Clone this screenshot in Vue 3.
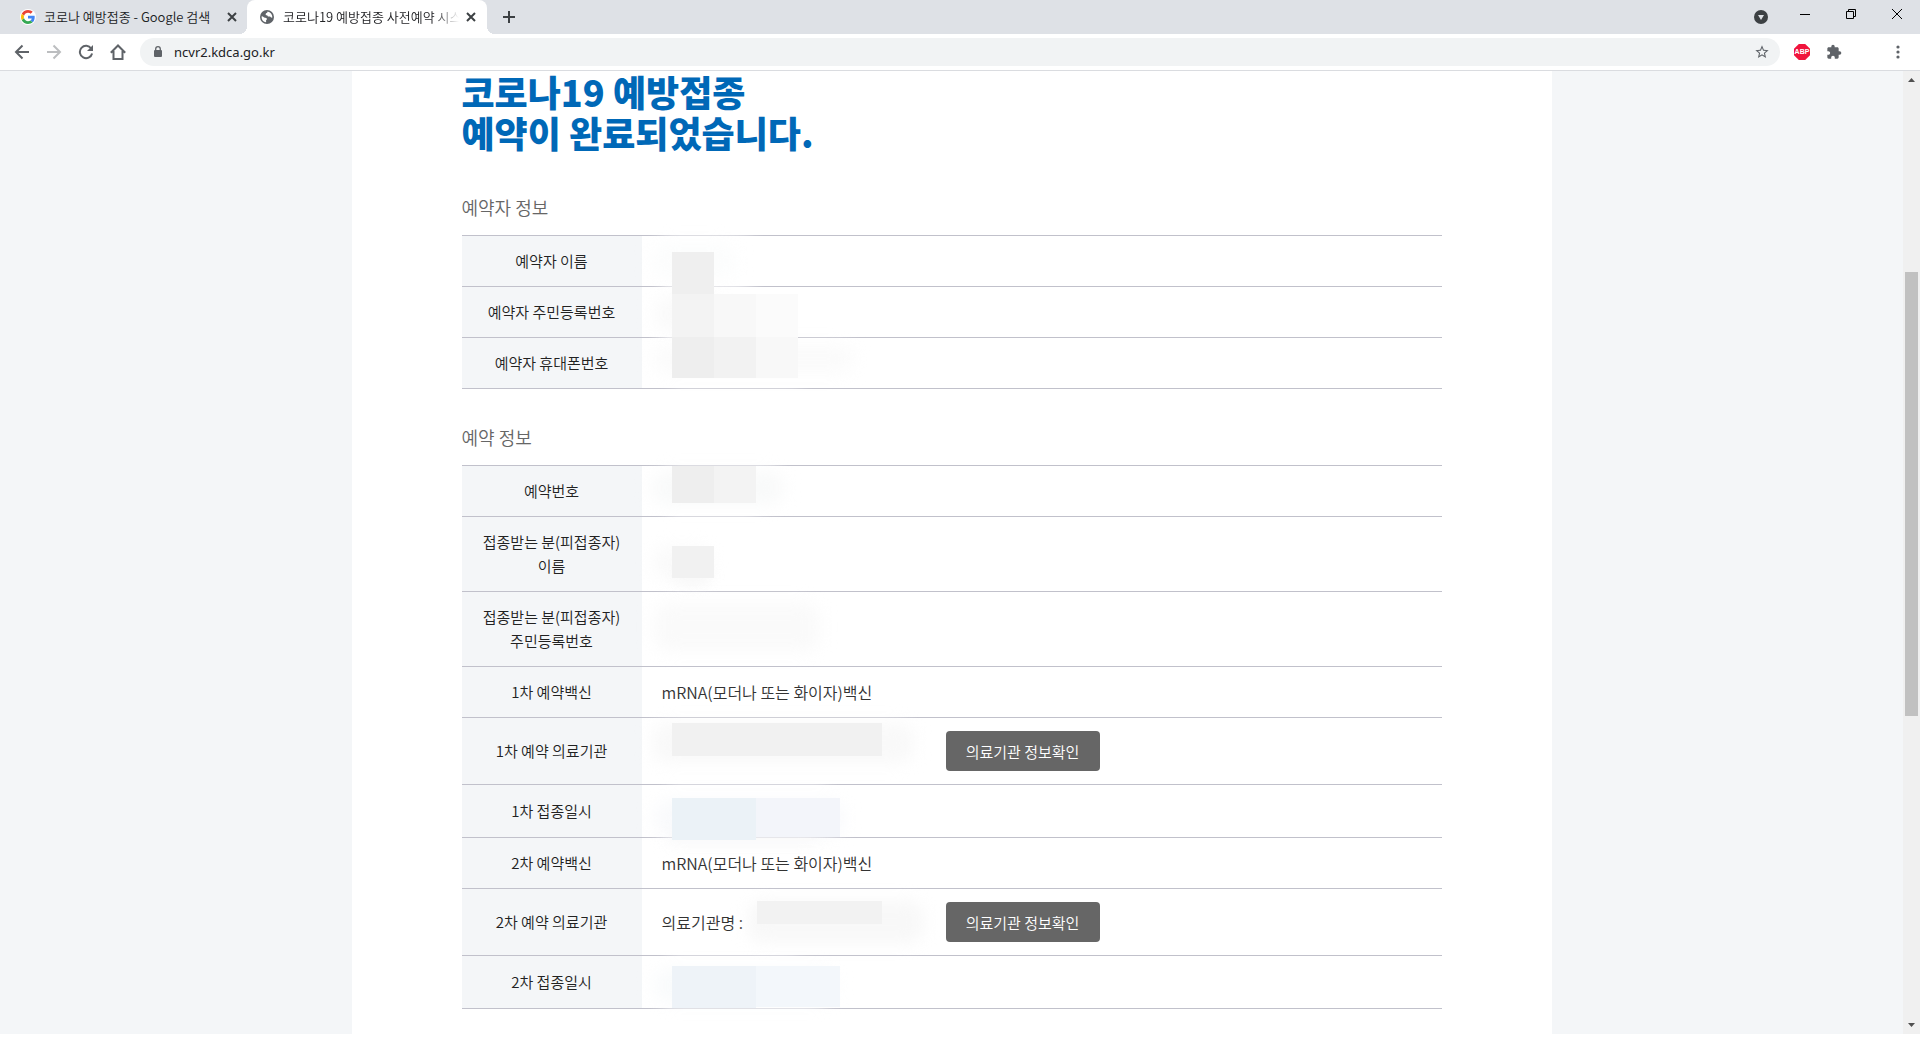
<script setup>
import { ref } from 'vue'

const address = ref('ncvr2.kdca.go.kr')

const booker = [
  { label: ['예약자 이름'] },
  { label: ['예약자 주민등록번호'] },
  { label: ['예약자 휴대폰번호'] },
]

const booking = [
  { label: ['예약번호'] },
  { label: ['접종받는 분(피접종자)', '이름'] },
  { label: ['접종받는 분(피접종자)', '주민등록번호'] },
  { label: ['1차 예약백신'], value: 'mRNA(모더나 또는 화이자)백신' },
  { label: ['1차 예약 의료기관'], clinic: true },
  { label: ['1차 접종일시'], tall: true },
  { label: ['2차 예약백신'], value: 'mRNA(모더나 또는 화이자)백신' },
  { label: ['2차 예약 의료기관'], value: '의료기관명 :', clinic: true },
  { label: ['2차 접종일시'], tall: true },
]

// Privacy masks: [left, top, width, height, colour, soft edge]
const bookerMasks = [
  [200, -6, 90, 14, '#ffffff90', true],
  [190, 8, 84, 36, '#fcfdfd', true],
  [200, 44, 90, 14, '#ffffffcc', true],
  [200, 94, 110, 16, '#ffffffcc', true],
  [210, 147, 130, 12, '#ffffff80', true],
  [192, 62, 70, 34, '#fafafa', true],
  [192, 110, 200, 28, '#fbfbfb', true],
  [210, 17, 42, 42, '#efefef'],
  [210, 59, 42, 43, '#f3f3f3'],
  [252, 59, 42, 43, '#f8f8f8'],
  [294, 59, 42, 43, '#fbfbfb'],
  [210, 102, 42, 41, '#eeeeee'],
  [252, 102, 42, 41, '#f2f2f2'],
  [294, 102, 42, 41, '#f8f8f8'],
]

const bookingMasks = [
  [206, -4, 110, 10, '#ffffff90', true],
  [190, 6, 132, 34, '#f9fafa', true],
  [206, 45, 90, 12, '#ffffffa0', true],
  [210, 1, 42, 37, '#eeeeee'],
  [252, 1, 42, 37, '#f3f3f3'],
  [190, 82, 60, 32, '#fafafa', true],
  [214, 104, 34, 14, '#f6f6f6', true],
  [210, 81, 42, 32, '#f1f1f1'],
  [192, 138, 166, 48, '#fafafa', true],
  [190, 258, 262, 40, '#f9f9f9', true],
  [210, 258, 210, 33, '#f1f1f1'],
  [206, 313, 160, 12, '#ffffffa0', true],
  [192, 335, 190, 36, '#f9fafc', true],
  [206, 367, 150, 12, '#f8f8f8cc', true],
  [210, 333, 84, 42, '#ebf2f7'],
  [294, 333, 84, 39, '#f3f5fa'],
  [286, 436, 176, 42, '#f8f8f8', true],
  [295, 436, 125, 23, '#f2f2f2'],
  [206, 483, 130, 12, '#ffffff90', true],
  [192, 504, 182, 34, '#f9fbfc', true],
  [202, 538, 160, 12, '#ffffffa0', true],
  [210, 501, 84, 42, '#eef3f8'],
  [294, 501, 84, 41, '#f3f7fb'],
]

const maskStyle = ([left, top, width, height, background]) => ({
  left: left + 'px',
  top: top + 'px',
  width: width + 'px',
  height: height + 'px',
  background,
})

const sections = [
  { title: '예약자 정보', rows: booker, masks: bookerMasks },
  { title: '예약 정보', rows: booking, masks: bookingMasks },
]
</script>

<template>
  <div class="window">
    <header class="strip">
      <div class="tab">
        <span class="favicon">
          <svg width="14" height="14" viewBox="0 0 48 48" aria-hidden="true">
            <path fill="#ea4335" d="M24 9.500c3.540 0 6.710 1.220 9.210 3.600l6.850-6.850C35.900 2.380 30.470 0 24 0 14.620 0 6.510 5.380 2.560 13.220l7.980 6.190C12.430 13.720 17.740 9.500 24 9.500z" />
            <path fill="#4285f4" d="M46.980 24.550c0-1.570-.15-3.090-.38-4.550H24v9.020h12.940c-.58 2.960-2.260 5.480-4.780 7.180l7.730 6c4.510-4.180 7.090-10.360 7.090-17.650z" />
            <path fill="#fbbc05" d="M10.530 28.590c-.48-1.450-.76-2.990-.76-4.590s.27-3.140.76-4.590l-7.980-6.190C.92 16.460 0 20.120 0 24c0 3.880.92 7.540 2.560 10.780l7.970-6.190z" />
            <path fill="#34a853" d="M24 48c6.480 0 11.930-2.130 15.890-5.810l-7.730-6c-2.150 1.450-4.920 2.300-8.160 2.300-6.260 0-11.570-4.220-13.470-9.910l-7.980 6.190C6.510 42.620 14.620 48 24 48z" />
          </svg>
        </span>
        <span class="tab-title">코로나 예방접종 - Google 검색</span>
        <button class="tab-close" aria-label="탭 닫기">
          <svg width="10" height="10" viewBox="0 0 10 10"><path d="M1 1l8 8M9 1L1 9" stroke="#3c4043" stroke-width="2" /></svg>
        </button>
      </div>
      <div class="tab active">
        <span class="favicon">
          <svg width="14" height="14" viewBox="0 0 14 14" aria-hidden="true">
            <circle cx="7" cy="7" r="7" fill="#5f6368" />
            <path fill="#fff" d="M7.600 1.600c-.3.9-.2 1.200-1 1.500-.9.300-.9 1-.9 1.600 0 .5.600.5 1.200.6.700.1.600.9 1.200 1.200.7.300 1.200-.2 1.900.1.600.3.500.9 1.300 1 .4.100.800 0 1.100-.1C12.300 4.500 10.500 2 7.600 1.600zM1.700 6.200C1.200 9 3 11.800 5.900 12.300c.3-.5.4-1.100.2-1.600-.2-.5.300-.8.700-1.200.5-.6 0-1.400-.7-1.600C5 7.600 4.600 7.900 3.800 7.200 3.200 6.700 2.500 6.300 1.700 6.200z" />
          </svg>
        </span>
        <span class="tab-title fade">코로나19 예방접종 사전예약 시스</span>
        <button class="tab-close" aria-label="탭 닫기">
          <svg width="10" height="10" viewBox="0 0 10 10"><path d="M1 1l8 8M9 1L1 9" stroke="#3c4043" stroke-width="2" /></svg>
        </button>
      </div>
      <button class="new-tab" aria-label="새 탭">
        <svg width="12" height="12" viewBox="0 0 12 12"><path d="M6 0v12M0 6h12" stroke="#3c4043" stroke-width="2" /></svg>
      </button>
      <div class="controls">
        <button class="search-tabs" aria-label="탭 검색">
          <svg width="14" height="14" viewBox="0 0 14 14"><circle cx="7" cy="7" r="7" fill="#3c4043" /><path d="M4 5h6L7 10z" fill="#dee1e6" /></svg>
        </button>
        <button aria-label="최소화">
          <svg width="10" height="10" viewBox="0 0 10 10"><path d="M0 5.500h10" stroke="#000" /></svg>
        </button>
        <button aria-label="이전 크기로 복원">
          <svg width="10" height="10" viewBox="0 0 10 10"><path d="M.5 2.500h7v7h-7zM2.500 2.500v-2h7v7h-2" fill="none" stroke="#000" /></svg>
        </button>
        <button aria-label="닫기">
          <svg width="10" height="10" viewBox="0 0 10 10"><path d="M0 0l10 10M10 0L0 10" stroke="#000" /></svg>
        </button>
      </div>
    </header>

    <nav class="toolbar">
      <button aria-label="뒤로">
        <svg width="16" height="16" viewBox="0 0 16 16"><path d="M15 8H2M8.500 1.500L2 8l6.500 6.500" fill="none" stroke="#5f6368" stroke-width="2" /></svg>
      </button>
      <button aria-label="앞으로">
        <svg width="16" height="16" viewBox="0 0 16 16"><path d="M1 8h13M7.500 1.500L14 8l-6.500 6.500" fill="none" stroke="#bcbec0" stroke-width="2" /></svg>
      </button>
      <button aria-label="새로고침">
        <svg width="16" height="16" viewBox="0 0 16 16"><path d="M13.200 4.500A6.200 6.200 0 1 0 14.100 9.500" fill="none" stroke="#5f6368" stroke-width="2" /><path d="M15 1v6H9z" fill="#5f6368" /></svg>
      </button>
      <button aria-label="홈">
        <svg width="16" height="16" viewBox="0 0 16 16"><path d="M.8 8.800L8 1.500l7.200 7.300M3.500 7v8h9V7" fill="none" stroke="#5f6368" stroke-width="2" /></svg>
      </button>
      <div class="omnibox">
        <svg width="10" height="12" viewBox="0 0 10 12" aria-hidden="true"><rect x="1" y="4" width="8" height="7" rx="1" fill="#5f6368" /><path d="M2.700 5V3a2.300 2.300 0 0 1 4.600 0v2" fill="none" stroke="#5f6368" stroke-width="1.300" /></svg>
        <input v-model="address" aria-label="주소창" type="text" spellcheck="false" />
        <button class="star" aria-label="북마크">
          <svg width="16" height="16" viewBox="0 0 24 24"><path fill="#5f6368" d="M22 9.240l-7.190-.62L12 2 9.190 8.630 2 9.240l5.460 4.730L5.820 21 12 17.270 18.180 21l-1.630-7.030L22 9.240zM12 15.400l-3.760 2.270 1-4.280-3.320-2.880 4.380-.38L12 6.100l1.710 4.040 4.380.38-3.320 2.880 1 4.280L12 15.400z" /></svg>
        </button>
      </div>
      <button class="ext" aria-label="Adblock Plus"><span class="abp">ABP</span></button>
      <button class="ext" aria-label="확장 프로그램">
        <svg width="16" height="16" viewBox="0 0 24 24"><path fill="#5f6368" d="M20.500 11H19V7c0-1.100-.9-2-2-2h-4V3.500a2.500 2.500 0 0 0-5 0V5H4c-1.100 0-1.990.9-1.990 2v3.800H3.500c1.490 0 2.700 1.210 2.700 2.700s-1.210 2.700-2.700 2.700H2V20c0 1.100.9 2 2 2h3.800v-1.500c0-1.490 1.210-2.700 2.700-2.700s2.700 1.210 2.700 2.700V22H17c1.100 0 2-.9 2-2v-4h1.500a2.500 2.500 0 0 0 0-5z" /></svg>
      </button>
      <button class="more" aria-label="메뉴">
        <svg width="4" height="14" viewBox="0 0 4 14"><g fill="#5f6368"><circle cx="2" cy="2" r="1.600" /><circle cx="2" cy="7" r="1.600" /><circle cx="2" cy="12" r="1.600" /></g></svg>
      </button>
    </nav>

    <div class="viewport">
      <div class="page">
        <main class="content">
          <h1>코로나19 예방접종<br />예약이 완료되었습니다.</h1>
          <section v-for="section in sections" :key="section.title">
            <h2>{{ section.title }}</h2>
            <div class="sheet">
              <table>
                <tbody>
                  <tr v-for="row in section.rows" :key="row.label.join()" :class="{ tall: row.tall }">
                    <th scope="row">
                      <span v-for="line in row.label" :key="line" class="line">{{ line }}</span>
                    </th>
                    <td>
                      <div v-if="row.clinic" class="clinic">
                        <span class="clinic-name">{{ row.value }}</span>
                        <button>의료기관 정보확인</button>
                      </div>
                      <template v-else>{{ row.value }}</template>
                    </td>
                  </tr>
                </tbody>
              </table>
              <i
                v-for="(mask, i) in section.masks"
                :key="i"
                class="mask"
                :class="{ soft: mask[5] }"
                :style="maskStyle(mask)"
                aria-hidden="true"
              ></i>
            </div>
          </section>
        </main>
      </div>
      <div class="scrollbar" aria-hidden="true">
        <svg width="17" height="17" viewBox="0 0 17 17"><path d="M5 11h7L8.500 7z" fill="#505050" /></svg>
        <div class="track"><div class="thumb"></div></div>
        <svg width="17" height="17" viewBox="0 0 17 17"><path d="M5 6h7l-3.500 4z" fill="#505050" /></svg>
      </div>
    </div>
  </div>
</template>

<style>
body {
  margin: 0;
  background: #fff;
}
</style>

<style scoped>
* {
  box-sizing: border-box;
}
.window {
  display: flex;
  flex-direction: column;
  height: 100vh;
  padding-bottom: 6px;
  overflow: hidden;
  font-family: "Noto Sans CJK KR DemiLight", "Noto Sans CJK KR", "Noto Sans", sans-serif;
  color: #333;
}
button {
  display: flex;
  align-items: center;
  justify-content: center;
  padding: 0;
  border: 0;
  background: none;
  font-family: inherit;
}
svg {
  display: block;
  flex: none;
}

/* tab strip */
.strip {
  display: flex;
  flex: none;
  height: 34px;
  padding-left: 7px;
  background: #dee1e6;
}
.tab {
  display: flex;
  align-items: center;
  width: 240px;
  padding: 0 7px 0 11px;
}
.tab.active {
  position: relative;
  padding-left: 10px;
  padding-right: 8px;
  border-radius: 8px 8px 0 0;
  background: #fff;
}
.tab.active::before,
.tab.active::after {
  content: "";
  position: absolute;
  bottom: 0;
  width: 8px;
  height: 8px;
}
.tab.active::before {
  right: 100%;
  background: radial-gradient(circle at 0 0, #dee1e6 8px, #fff 8px);
}
.tab.active::after {
  left: 100%;
  background: radial-gradient(circle at 100% 0, #dee1e6 8px, #fff 8px);
}
.favicon {
  display: flex;
  align-items: center;
  justify-content: center;
  width: 20px;
  height: 16px;
}
.tab:not(.active) .favicon {
  width: 16px;
  border-radius: 50%;
  background: #fff;
  margin: 0 2px;
}
.tab-title {
  flex: 1;
  min-width: 0;
  margin: 0 4px 0 6px;
  overflow: hidden;
  white-space: nowrap;
  font-size: 13px;
  font-weight: 300;
  line-height: 20px;
  color: #202124;
}
.fade {
  -webkit-mask-image: linear-gradient(to left, transparent, #000 24px);
  mask-image: linear-gradient(to left, transparent, #000 24px);
}
.tab-close {
  width: 16px;
  height: 16px;
}
.new-tab {
  width: 28px;
  margin-left: 8px;
}
.controls {
  display: flex;
  height: 28px;
  margin-left: auto;
}
.controls button {
  width: 46px;
}
.controls .search-tabs {
  width: 42px;
  height: 34px;
}

/* toolbar */
.toolbar {
  display: flex;
  align-items: center;
  flex: none;
  height: 37px;
  padding: 0 6px;
  border-bottom: 1px solid #dadce0;
}
.toolbar > button {
  width: 32px;
  height: 28px;
}
.omnibox {
  display: flex;
  align-items: center;
  flex: 1;
  height: 28px;
  margin: 0 6px;
  padding: 0 10px 0 13px;
  border-radius: 14px;
  background: #f1f3f4;
}
.omnibox input {
  flex: 1;
  min-width: 0;
  margin-left: 11px;
  padding: 0;
  border: 0;
  outline: 0;
  background: none;
  font-family: "Noto Sans", sans-serif;
  font-size: 13px;
  line-height: 20px;
  color: #202124;
}
.abp {
  width: 16px;
  height: 16px;
  clip-path: polygon(30% 0, 70% 0, 100% 30%, 100% 70%, 70% 100%, 30% 100%, 0 70%, 0 30%);
  background: #f0143c;
  font-family: "Liberation Sans", sans-serif;
  font-size: 7px;
  font-weight: 700;
  line-height: 16px;
  text-align: center;
  color: #fff;
}
.toolbar .more {
  margin-left: 32px;
}

/* page */
.viewport {
  display: flex;
  flex: 1;
  min-height: 0;
}
.page {
  flex: 1;
  min-width: 0;
  background: #f4f6f8;
}
.content {
  max-width: 1200px;
  height: 100%;
  margin: 0 auto;
  padding: 0 110px;
  background: #fff;
}
h1 {
  margin: 0 0 40px;
  font-family: "Noto Sans CJK KR", sans-serif;
  font-size: 36px;
  font-weight: 900;
  line-height: 41px;
  color: #0068b7;
}
section {
  margin-bottom: 34px;
}
h2 {
  margin: 0 0 14px;
  font-size: 18px;
  font-weight: 300;
  line-height: 28px;
  color: #666;
}
.sheet {
  position: relative;
}
table {
  width: 100%;
  border-top: 1px solid #c1c1cb;
  border-spacing: 0;
}
th,
td {
  padding: 13px 20px;
  border-bottom: 1px solid #c1c1cb;
  line-height: 24px;
  vertical-align: middle;
}
.tall th,
.tall td {
  height: 53px;
}
th {
  width: 180px;
  padding: 13px 8px;
  background: #f4f6f8;
  font-size: 15px;
  font-weight: 300;
  text-align: center;
  color: #222;
}
td {
  font-size: 16px;
  font-weight: 300;
  text-align: left;
  color: #333;
}
.line {
  display: block;
}
.clinic {
  display: flex;
  align-items: center;
}
.clinic-name {
  width: 284px;
}
.clinic button {
  width: 154px;
  height: 40px;
  border-radius: 4px;
  background: #666;
  font-size: 15px;
  font-weight: 300;
  color: #fff;
}
.mask {
  position: absolute;
}
.mask.soft {
  border-radius: 16px;
  filter: blur(8px);
}

/* scrollbar */
.scrollbar {
  display: flex;
  flex-direction: column;
  flex: none;
  width: 17px;
  background: #f0f0f0;
}
.track {
  flex: 1;
  display: flex;
  flex-direction: column;
  padding: 0 2px;
}
.track::before {
  content: "";
  flex: 184;
}
.track::after {
  content: "";
  flex: 301;
}
.thumb {
  flex: 444;
  background: #c1c1c1;
}
</style>
